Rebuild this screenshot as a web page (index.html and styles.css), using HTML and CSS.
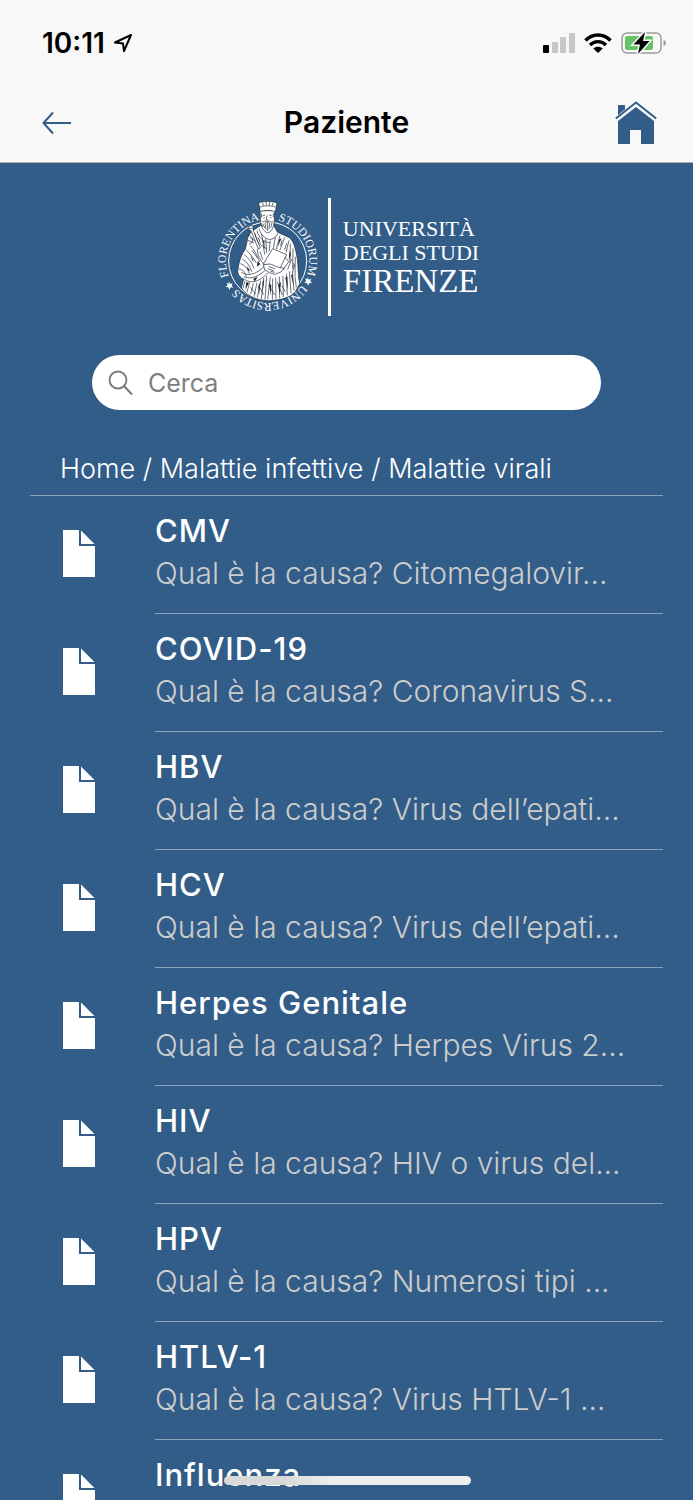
FILE: index.html
```html
<!DOCTYPE html>
<html lang="it">
  <head>
    <meta charset="UTF-8" />
    <meta name="viewport" content="width=device-width, initial-scale=1.0" />
    <title>Paziente</title>
    <link rel="stylesheet" href="styles.css">
  </head>
  <body>
    <svg class="defs" width="0" height="0">
      <symbol id="doc" viewBox="0 0 32 47">
        <path d="M0 0H16V16H32V47H0Z" />
        <path d="M18 0.500L31.500 14H18Z" />
      </symbol>
    </svg>
    <div class="app">
      <header class="header">
        <div class="status">
          <span class="time">10:11</span>
          <svg class="location" width="20" height="20" viewBox="0 0 20 20">
            <path d="M18 2L2 9.500L10 10.500L11 18Z" fill="none" stroke="#000" stroke-width="2" stroke-linejoin="round" />
          </svg>
          <div class="status-icons">
            <svg width="32" height="20" viewBox="0 0 32 20">
              <rect x="0" y="12" width="6" height="8" rx="1" fill="#000" />
              <rect x="9" y="9" width="6" height="11" rx="1" fill="#c8c8c8" />
              <rect x="17" y="4" width="6" height="16" rx="1" fill="#c8c8c8" />
              <rect x="26" y="0" width="6" height="20" rx="1" fill="#c8c8c8" />
            </svg>
            <svg width="28" height="20" viewBox="0 0 28 20">
              <path d="M1.500 7.500C8.500 0.200 19.500 0.200 26.500 7.500" fill="none" stroke="#000" stroke-width="3.600" />
              <path d="M6 12C10.500 7.500 17.500 7.500 22 12" fill="none" stroke="#000" stroke-width="3.400" />
              <path d="M9.300 15.600C12 13.200 16 13.200 18.700 15.600L14 20Z" />
            </svg>
            <svg width="46" height="24" viewBox="0 0 46 24">
              <rect x="1" y="2" width="39" height="20" rx="5" fill="none" stroke="#9c9c9c" stroke-width="1.500" />
              <path d="M42.500 9C45.800 10 45.800 14 42.500 15Z" fill="#9c9c9c" />
              <rect x="4" y="5" width="28" height="14" rx="2" fill="#65c466" />
              <path d="M24 1L12.500 13.500H19L17 23L28.500 10H22Z" stroke="#f8f8f8" stroke-width="3" paint-order="stroke" />
            </svg>
          </div>
        </div>
        <nav class="nav">
          <a class="back" href="#" aria-label="Indietro">
            <svg width="30" height="24" viewBox="0 0 30 24">
              <path d="M29 12H1.500M11 1.500L1.500 12L11 22.500" fill="none" stroke="#325d88" stroke-width="2" />
            </svg>
          </a>
          <h1>Paziente</h1>
          <a class="home" href="#" aria-label="Home">
            <svg width="42" height="44" viewBox="0 0 42 44">
              <path d="M3 4H10V9L3 15Z" />
              <path d="M0.800 18.500L21 2L41.200 18.500" fill="none" stroke="#f8f8f8" stroke-width="4" />
              <path d="M0.800 17.500L21 1.500L41.200 17.500" fill="none" stroke="#325d88" stroke-width="2" />
              <path d="M3 20L21 6L39 20V43H26V29H15V43H3Z" />
            </svg>
          </a>
        </nav>
      </header>

      <main class="content">
        <div class="logo">
          <svg class="seal" width="100" height="112" viewBox="24 33 300 336">
            <defs>
              <path id="from-bottom" d="M173 338A125 125 0 0 1 173 88A125 125 0 0 1 173 338" />
              <path id="from-top" d="M173 88A125 125 0 0 1 173 338A125 125 0 0 1 173 88" />
            </defs>
            <circle cx="173" cy="213" r="117" fill="none" stroke="#fff" stroke-width="3" />
            <g class="seal-text">
              <text><textPath href="#from-bottom" startOffset="149">FLORENTINA</textPath></text>
              <text><textPath href="#from-bottom" startOffset="424">STUDIORUM</textPath></text>
              <text><textPath href="#from-top" startOffset="272">UNIVERSITAS</textPath></text>
            </g>
            <path class="white" d="M57 274L60 282L68 279L65 286L70 293L62 292L58 300L55 292L47 291L53 285L49 278L56 281Z" />
            <path class="white" d="M293 261L296 269L304 266L301 273L306 280L298 279L294 287L291 279L283 278L289 272L285 265L292 268Z" />
            <!-- cloak -->
            <path class="white line" d="M153 106C135 118 119 126 114 142L106 178C96 192 88 208 84 238C80 253 92 264 101 267L94 294C112 320 146 332 177 332C214 331 242 322 257 304L269 281C264 260 265 234 262 207C257 177 252 154 238 143L202 126L190 104Z" />
            <!-- head, beard and crown -->
            <path class="white line" d="M150 62L151 88C151 108 160 125 174 129C188 122 193 106 193 88L194 62Z" />
            <path class="white line" d="M146 39C158 33 189 33 201 39L196 65C184 60 161 60 151 65Z" />
            <path class="line" fill="none" d="M150 51C163 46 184 46 197 51M158 39L160 47M168 36L169 46M179 36L178 46M189 39L187 47M154 70L155 83M190 69L190 82M158 77L165 75M177 75L185 77M171 76L169 90L175 91M160 84L164 84M179 83L184 83" />
            <path class="line" fill="none" d="M155 93C162 100 160 90 171 94C181 90 182 101 190 94M159 101L164 114M165 99L168 119M172 98L173 123M179 99L177 118M186 99L182 113M154 100L158 111M166 96L178 97" />
            <!-- sceptre -->
            <path class="white line" d="M117 111L123 106L130 111L129 119L151 174L145 177L123 122L116 119Z" />
            <path class="line" fill="none" d="M116 117L130 114M112 136C123 136 130 145 128 155L117 163M120 143L136 153M114 151L132 159" />
            <!-- folds of the robe -->
            <path class="line" fill="none" d="M147 117C155 136 162 144 179 149C195 145 201 138 204 128M141 122C146 143 162 157 180 158M135 130C139 155 153 170 171 176M155 132L164 194M167 146L170 190M181 152L177 184M196 141L190 176M210 136L199 178M224 142L210 180M237 151L228 187M216 151L212 168M230 159L224 180M241 161L240 217M249 175L248 238M256 200L255 260M245 207L233 239" />
            <path class="line" fill="none" d="M109 181C120 190 129 202 139 219M102 194C119 207 126 218 132 236M97 207C111 216 120 228 125 245M91 221C104 225 114 236 118 251M87 237C98 238 106 247 109 260M120 166C132 177 142 198 149 216M142 177C142 196 152 212 161 222M150 184L158 209M126 181L143 205M94 247C115 260 139 253 164 228M101 260C125 271 150 256 171 236M103 267C128 286 154 269 174 248" />
            <path class="line" fill="none" d="M119 277L111 306M130 280L122 313M141 278L132 320M152 272L142 323M161 264L154 327M170 258L165 329M181 260L173 328M188 265L187 329M197 263L198 328M208 260L209 325M219 257L220 321M229 251L232 316M238 244L243 310M247 241L252 302M255 261L259 292M105 272L99 295M148 290L161 314M176 285L194 315M215 286L226 305M202 276L217 315M122 292L137 312" />
            <path class="dark" d="M121 193L132 216L126 210ZM143 213L151 222L141 230ZM111 229L121 243L113 240ZM130 266L143 260L134 275ZM158 276L163 268L158 307ZM178 276L184 287L181 318ZM205 285L213 275L209 313ZM226 263L232 259L234 301ZM243 256L247 252L251 289ZM208 148L215 145L203 170ZM158 149L163 156L164 181ZM142 140L147 145L153 164ZM239 181L243 193L236 212ZM251 216L254 226L250 248ZM109 276L117 278L106 299ZM145 288L151 278L147 315Z" />
            <!-- book and hands -->
            <path class="white line" d="M188 176L230 194L207 241L160 222Z" />
            <path class="white line" d="M160 224L181 222L203 231L222 235L213 246L194 253L178 248L164 239Z" />
            <path class="line" fill="none" d="M176 229L196 237M174 236L192 243M181 244L194 247M224 201L236 215L220 239" />
          </svg>
          <div class="logo-text">
            <span>UNIVERSITÀ</span>
            <span>DEGLI STUDI</span>
            <span class="city">FIRENZE</span>
          </div>
        </div>

        <form class="search">
          <label for="cerca" aria-label="Cerca">
            <svg width="26" height="26" viewBox="0 0 26 26">
              <circle cx="10" cy="10" r="8.500" fill="none" stroke="#777" stroke-width="1.800" />
              <path d="M16 16L24 24.500" stroke="#777" stroke-width="2" />
            </svg>
          </label>
          <input id="cerca" type="text" placeholder="Cerca" />
        </form>

        <div class="breadcrumb">
          <a href="#">Home</a> / <a href="#">Malattie infettive</a> / <a href="#">Malattie virali</a>
        </div>

        <ul class="list">
          <li><a href="#">
            <svg class="doc"><use href="#doc" /></svg>
            <div class="item">
              <h2>CMV</h2>
              <p>Qual è la causa? Citomegalovir...</p>
            </div>
          </a></li>
          <li><a href="#">
            <svg class="doc"><use href="#doc" /></svg>
            <div class="item">
              <h2>COVID-19</h2>
              <p>Qual è la causa? Coronavirus S...</p>
            </div>
          </a></li>
          <li><a href="#">
            <svg class="doc"><use href="#doc" /></svg>
            <div class="item">
              <h2>HBV</h2>
              <p>Qual è la causa? Virus dell’epati...</p>
            </div>
          </a></li>
          <li><a href="#">
            <svg class="doc"><use href="#doc" /></svg>
            <div class="item">
              <h2>HCV</h2>
              <p>Qual è la causa? Virus dell’epati...</p>
            </div>
          </a></li>
          <li><a href="#">
            <svg class="doc"><use href="#doc" /></svg>
            <div class="item">
              <h2>Herpes Genitale</h2>
              <p>Qual è la causa? Herpes Virus 2...</p>
            </div>
          </a></li>
          <li><a href="#">
            <svg class="doc"><use href="#doc" /></svg>
            <div class="item">
              <h2>HIV</h2>
              <p>Qual è la causa? HIV o virus del...</p>
            </div>
          </a></li>
          <li><a href="#">
            <svg class="doc"><use href="#doc" /></svg>
            <div class="item">
              <h2>HPV</h2>
              <p>Qual è la causa? Numerosi tipi ...</p>
            </div>
          </a></li>
          <li><a href="#">
            <svg class="doc"><use href="#doc" /></svg>
            <div class="item">
              <h2>HTLV-1</h2>
              <p>Qual è la causa? Virus HTLV-1 ...</p>
            </div>
          </a></li>
          <li><a href="#">
            <svg class="doc"><use href="#doc" /></svg>
            <div class="item">
              <h2>Influenza</h2>
            </div>
          </a></li>
        </ul>
      </main>
      <div class="home-indicator"></div>
    </div>
  </body>
</html>
```
FILE: styles.css
```css
* {
  box-sizing: border-box;
}

body {
  margin: 0;
  font-family: Inter, "Liberation Sans", sans-serif;
  background-color: #325d88;
  color: white;
}

a {
  color: inherit;
  text-decoration: none;
}

svg {
  display: block;
  flex-shrink: 0;
}

.defs {
  position: absolute;
}

.app {
  height: 100vh;
  display: flex;
  flex-direction: column;
  overflow: hidden;
}

.header {
  flex-shrink: 0;
  background-color: #f8f8f8;
  border-bottom: 1px solid #a9aeb3;
  color: black;
}

.status {
  display: flex;
  align-items: center;
  height: 86px;
  padding: 0 26px 0 42px;
}

.time {
  font-size: 28px;
  font-weight: 600;
}

.location {
  margin-left: 8px;
}

.status-icons {
  display: flex;
  align-items: center;
  gap: 9px;
  margin-left: auto;
}

.nav {
  display: flex;
  align-items: center;
  justify-content: space-between;
  height: 76px;
  padding: 2px 36px 4px;
}

.nav a {
  width: 42px;
  fill: #325d88;
}

.nav .back {
  padding-left: 6px;
}

.nav h1 {
  margin: 0;
  padding-bottom: 2px;
  font-size: 30px;
  font-weight: 600;
}

.content {
  flex: 1;
  overflow-y: auto;
  scrollbar-width: none;
}

.logo {
  display: flex;
  justify-content: center;
  align-items: center;
  gap: 10px;
  padding: 35px 0 0 4px;
}

.seal {
  overflow: visible;
}

.seal-text {
  font-family: "Liberation Serif", serif;
  font-size: 35px;
  fill: white;
}

.white {
  fill: white;
}

.line {
  stroke: #1d2733;
  stroke-width: 2;
}

.dark {
  fill: #1d2733;
}

.logo-text {
  display: flex;
  flex-direction: column;
  justify-content: center;
  height: 118px;
  padding-left: 12px;
  border-left: 3px solid white;
  font-family: "Liberation Serif", serif;
  font-size: 22px;
  line-height: 24px;
}

.logo-text .city {
  font-size: 33px;
  line-height: 32px;
}

.search {
  display: flex;
  align-items: center;
  gap: 14px;
  height: 55px;
  margin: 39px 92px 0;
  padding: 0 16px;
  background-color: white;
  border-radius: 28px;
}

.search input {
  flex: 1;
  min-width: 0;
  padding: 0;
  border: none;
  outline: none;
  background: none;
  font-family: inherit;
  font-size: 25px;
}

.search input::placeholder {
  color: #7f7f7f;
}

.breadcrumb {
  margin: 0 30px;
  padding: 43px 30px 10px;
  border-bottom: 1px solid #8ba3bb;
  font-size: 27px;
  font-weight: 350;
  line-height: 32px;
  white-space: nowrap;
}

.list {
  list-style: none;
  margin: 0 30px;
  padding: 0;
}

.list a {
  display: flex;
}

.doc {
  width: 32px;
  height: 47px;
  margin: 34px 60px 0 33px;
  fill: white;
}

.item {
  flex: 1;
  min-width: 0;
  height: 118px;
  padding-top: 13px;
  border-bottom: 1px solid #8ba3bb;
  white-space: nowrap;
}

.item h2 {
  margin: 0;
  font-size: 31px;
  font-weight: 500;
  line-height: 43px;
  letter-spacing: 1px;
}

.item p {
  margin: 0;
  font-size: 30px;
  font-weight: 350;
  line-height: 43px;
  color: #ccc;
}

.home-indicator {
  position: fixed;
  bottom: 15px;
  left: 50%;
  width: 247px;
  height: 9px;
  margin-left: -123px;
  border-radius: 5px;
  background: linear-gradient(to right, #d9d9d9 25%, #efefef 45%);
}
```
